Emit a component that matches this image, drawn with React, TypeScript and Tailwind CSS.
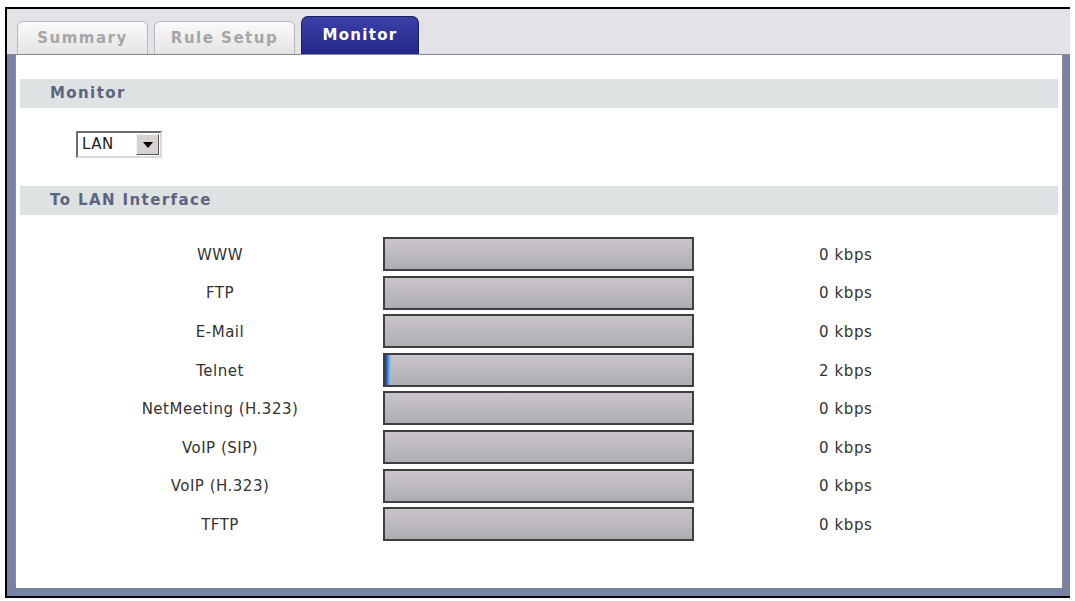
import React from "react";

const rows = [
  { name: "WWW", kbps: 0 },
  { name: "FTP", kbps: 0 },
  { name: "E-Mail", kbps: 0 },
  { name: "Telnet", kbps: 2 },
  { name: "NetMeeting (H.323)", kbps: 0 },
  { name: "VoIP (SIP)", kbps: 0 },
  { name: "VoIP (H.323)", kbps: 0 },
  { name: "TFTP", kbps: 0 },
];

const font = { fontFamily: '"DejaVu Sans", Verdana, sans-serif' };

function SectionHeader({ title }: { title: string }) {
  return (
    <div className="h-[29px] bg-[#dde2e3] flex items-center pl-[30px] text-[15px] font-bold tracking-[1.4px] text-[#5c6580]">
      {title}
    </div>
  );
}

function Tab({ label, active }: { label: string; active?: boolean }) {
  if (active) {
    return (
      <div className="h-[38px] w-[118px] rounded-t-[7px] border border-b-0 border-[#1c1f5e] bg-linear-to-b from-[#3c40a8] to-[#23278a] flex items-center justify-center text-white text-[15px] font-bold tracking-[1.3px]">
        {label}
      </div>
    );
  }
  return (
    <div className="h-[33px] rounded-t-[6px] border border-b-0 border-[#b9b9bd] bg-linear-to-b from-[#fafafa] to-[#e4e4e6] flex items-center justify-center text-[#a6a6a8] text-[15px] font-bold tracking-[1.5px]">
      {label}
    </div>
  );
}

export default function App() {
  return (
    <div className="w-[1075px] h-[601px] bg-white overflow-hidden" style={font}>
      <div className="ml-[5px] mt-[7px] w-[1065px] h-[591px] border-t-2 border-l-2 border-b-2 border-black bg-[#7782a2] flex flex-col">
        {/* tab strip */}
        <div className="h-[46px] bg-[#e3e2e7] flex items-end pl-[10px] gap-[6px] border-b border-[#8a8a8e]">
          <div className="w-[131px]">
            <Tab label="Summary" />
          </div>
          <div className="w-[141px]">
            <Tab label="Rule Setup" />
          </div>
          <Tab label="Monitor" active />
        </div>

        {/* panel */}
        <div className="flex-1 pl-[8px] pr-[7px] pb-[8px] flex">
          <div className="flex-1 bg-white border-l border-r border-[#8c8c90] px-[4px] pt-[24px]">
            <SectionHeader title="Monitor" />

            <div className="h-[78px] pl-[56px] pt-[23px]">
              <div className="w-[86px] h-[27px] border-2 border-t-[#6d6d6d] border-l-[#6d6d6d] border-b-[#d8d8d8] border-r-[#d8d8d8] bg-white flex items-center justify-between pl-[4px] pr-[1px]">
                <span className="text-[15px] text-[#222] tracking-[0.5px]">LAN</span>
                <span className="w-[23px] h-[21px] bg-[#d6d3ce] border border-t-[#f4f4f4] border-l-[#f4f4f4] border-b-[#555] border-r-[#555] flex items-center justify-center">
                  <svg width="10" height="6" viewBox="0 0 10 6">
                    <path d="M0 0 H10 L5 6 Z" fill="#000" />
                  </svg>
                </span>
              </div>
            </div>

            <SectionHeader title="To LAN Interface" />

            <div className="pt-[22px] flex flex-col gap-[4.6px]">
              {rows.map((r) => (
                <div key={r.name} className="flex items-center h-[34px]">
                  <div className="w-[320px] ml-[40px] pt-[2px] text-center text-[15px] tracking-[0.5px] text-[#333]">
                    {r.name}
                  </div>
                  <div className="ml-[3px] w-[311px] h-[34px] border-2 border-[#3f3f42] bg-linear-to-b from-[#c9c5cb] to-[#b0acb3] flex">
                    {r.kbps > 0 && (
                      <div className="w-[6px] h-full bg-linear-to-r from-[#1c2f90] via-[#3e8fdc] to-[#b9c3d6]" />
                    )}
                  </div>
                  <div className="ml-[125px] pt-[2px] text-[15px] tracking-[0.6px] text-[#333]">
                    {r.kbps} kbps
                  </div>
                </div>
              ))}
            </div>
          </div>
        </div>
      </div>
    </div>
  );
}
